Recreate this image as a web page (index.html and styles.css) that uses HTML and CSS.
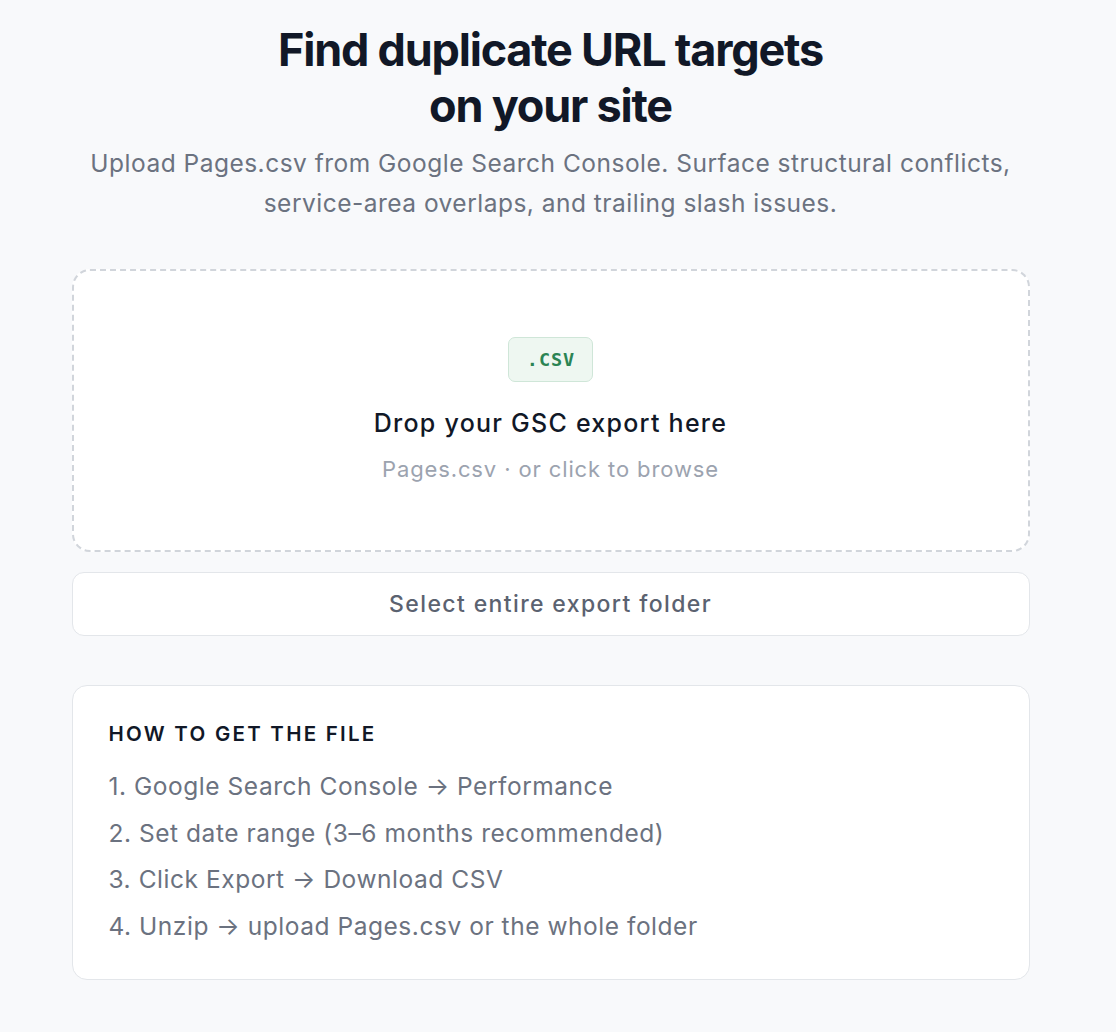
FILE: index.html
```html
<!DOCTYPE html>
<html lang="en">
<head>
<meta charset="utf-8">
<title>Find duplicate URL targets</title>
<link rel="stylesheet" href="styles.css">
</head>
<body>
<main class="page">
  <header class="hero">
    <h1 class="hero-title">Find duplicate URL targets<br>on your site</h1>
    <p class="hero-sub">Upload Pages.csv from Google Search Console. Surface structural conflicts,<br>service-area overlaps, and trailing slash issues.</p>
  </header>

  <section class="dropzone">
    <span class="badge">.CSV</span>
    <div class="drop-title">Drop your GSC export here</div>
    <div class="drop-hint">Pages.csv · or click to browse</div>
  </section>

  <button class="folder-btn" type="button">Select entire export folder</button>

  <section class="howto">
    <h2 class="howto-title">HOW TO GET THE FILE</h2>
    <ol class="howto-list">
      <li>1. Google Search Console → Performance</li>
      <li>2. Set date range (3–6 months recommended)</li>
      <li>3. Click Export → Download CSV</li>
      <li>4. Unzip → upload Pages.csv or the whole folder</li>
    </ol>
  </section>
</main>
</body>
</html>
```

FILE: styles.css
```css
* { box-sizing: border-box; }

html, body {
  margin: 0;
  padding: 0;
  background: #f8f9fb;
}

body {
  font-family: Inter, "Noto Sans", "Liberation Sans", sans-serif;
  color: #111827;
  padding-right: 15px;
}

.page {
  width: 958px;
  margin: 0 auto;
  padding-top: 22px;
  padding-bottom: 40px;
  display: flex;
  flex-direction: column;
}

.hero {
  text-align: center;
}

.hero-title {
  margin: 0;
  font-size: 45px;
  line-height: 56px;
  font-weight: 700;
  letter-spacing: -0.027em;
  color: #111827;
}

.hero-sub {
  margin: 9px 0 0;
  font-size: 24.5px;
  line-height: 40px;
  letter-spacing: 0.02em;
  color: #6b7280;
}

.dropzone {
  margin-top: 46px;
  height: 283px;
  border: 2px dashed #d1d5db;
  border-radius: 18px;
  background: #ffffff;
  display: flex;
  flex-direction: column;
  align-items: center;
  padding-top: 66px;
}

.badge {
  display: inline-block;
  font-family: "DejaVu Sans Mono", "Liberation Mono", monospace;
  font-weight: 700;
  font-size: 18.5px;
  line-height: 25px;
  letter-spacing: 0.05em;
  padding: 9px 17px 9px 18px;
  color: #2b8454;
  background: #eef7f1;
  border: 1.5px solid #cfe6d8;
  border-radius: 7px;
}

.drop-title {
  margin-top: 23px;
  font-size: 25px;
  line-height: 36px;
  font-weight: 500;
  letter-spacing: 0.05em;
  color: #111827;
}

.drop-hint {
  margin-top: 12px;
  font-size: 22px;
  line-height: 32px;
  letter-spacing: 0.04em;
  color: #9ca3af;
}

.folder-btn {
  margin-top: 20px;
  height: 64px;
  width: 100%;
  background: #ffffff;
  border: 1.5px solid #e3e6ea;
  border-radius: 12px;
  font-family: inherit;
  font-size: 23px;
  font-weight: 500;
  letter-spacing: 0.06em;
  color: #5b6270;
  cursor: pointer;
}

.howto {
  margin-top: 49px;
  background: #ffffff;
  border: 1.5px solid #e3e6ea;
  border-radius: 15px;
  padding: 33px 36px 29px;
}

.howto-title {
  margin: 0;
  font-size: 20.5px;
  line-height: 30px;
  font-weight: 600;
  letter-spacing: 0.11em;
  color: #111827;
}

.howto-list {
  list-style: none;
  margin: 14px 0 0;
  padding: 0;
}

.howto-list li {
  font-size: 24.5px;
  line-height: 46.7px;
  letter-spacing: 0.022em;
  color: #6b7280;
}
```
